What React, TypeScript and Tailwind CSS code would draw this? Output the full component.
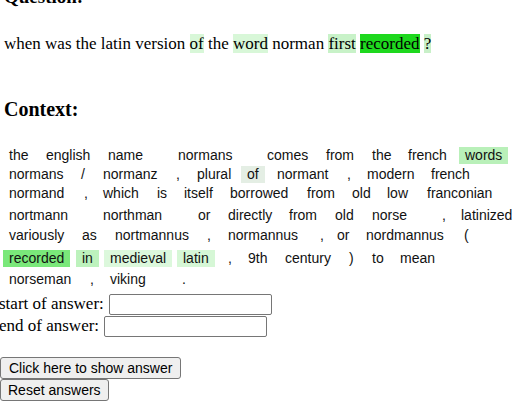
type Token = { t: string; w: string; bg?: string };

const lines: { row: string; tokens: Token[] }[] = [
  {
    row: "mt-[25px]",
    tokens: [
      { t: "the", w: "w-[37px]" },
      { t: "english", w: "w-[62px]" },
      { t: "name", w: "w-[70px]" },
      { t: "normans", w: "w-[89px]" },
      { t: "comes", w: "w-[59px]" },
      { t: "from", w: "w-[46px]" },
      { t: "the", w: "w-[36px]" },
      { t: "french", w: "w-[57px]" },
      { t: "words", w: "w-auto", bg: "bg-[#b9f0b9]" },
    ],
  },
  {
    row: "mt-[2px]",
    tokens: [
      { t: "normans", w: "w-[72px]" },
      { t: "/", w: "w-[22px]" },
      { t: "normanz", w: "w-[73px]" },
      { t: ",", w: "w-[21px]" },
      { t: "plural", w: "w-[50px]" },
      { t: "of", w: "w-[30px]", bg: "bg-[#e4eee4]" },
      { t: "normant", w: "w-[70px]" },
      { t: ",", w: "w-[20px]" },
      { t: "modern", w: "w-[64px]" },
      { t: "french", w: "w-auto" },
    ],
  },
  {
    row: "mt-[2px]",
    tokens: [
      { t: "normand", w: "w-[75px]" },
      { t: ",", w: "w-[19px]" },
      { t: "which", w: "w-[54px]" },
      { t: "is", w: "w-[27px]" },
      { t: "itself", w: "w-[46px]" },
      { t: "borrowed", w: "w-[77px]" },
      { t: "from", w: "w-[45px]" },
      { t: "old", w: "w-[35px]" },
      { t: "low", w: "w-[40px]" },
      { t: "franconian", w: "w-auto" },
    ],
  },
  {
    row: "mt-[5px]",
    tokens: [
      { t: "nortmann", w: "w-[94px]" },
      { t: "northman", w: "w-[95px]" },
      { t: "or", w: "w-[30px]" },
      { t: "directly", w: "w-[61px]" },
      { t: "from", w: "w-[46px]" },
      { t: "old", w: "w-[37px]" },
      { t: "norse", w: "w-[70px]" },
      { t: ",", w: "w-[19px]" },
      { t: "latinized", w: "w-auto" },
    ],
  },
  {
    row: "mt-[3px]",
    tokens: [
      { t: "variously", w: "w-[73px]" },
      { t: "as", w: "w-[33px]" },
      { t: "nortmannus", w: "w-[92px]" },
      { t: ",", w: "w-[21px]" },
      { t: "normannus", w: "w-[92px]" },
      { t: ",", w: "w-[17px]" },
      { t: "or", w: "w-[29px]" },
      { t: "nordmannus", w: "w-[98px]" },
      { t: "(", w: "w-auto" },
    ],
  },
  {
    row: "mt-[6px]",
    tokens: [
      { t: "recorded", w: "w-[73px]", bg: "bg-[#7ae87a]" },
      { t: "in", w: "w-[28px]", bg: "bg-[#bdf2bd]" },
      { t: "medieval", w: "w-[73px]", bg: "bg-[#dcf8dc]" },
      { t: "latin", w: "w-[45px]", bg: "bg-[#d6f7d6]" },
      { t: ",", w: "w-[20px]" },
      { t: "9th", w: "w-[37px]" },
      { t: "century", w: "w-[64px]" },
      { t: ")", w: "w-[23px]" },
      { t: "to", w: "w-[28px]" },
      { t: "mean", w: "w-auto" },
    ],
  },
  {
    row: "mt-[4px]",
    tokens: [
      { t: "norseman", w: "w-[81px]" },
      { t: ",", w: "w-[20px]" },
      { t: "viking", w: "w-[72px]" },
      { t: ".", w: "w-auto" },
    ],
  },
];

function ContextLine({ row, tokens }: { row: string; tokens: Token[] }) {
  return (
    <div className={`flex flex-row h-[17px] pl-[3px] ${row}`}>
      {tokens.map((tok, i) => (
        <div key={i} className={`shrink-0 ${tok.w}`}>
          <span className={`inline-block h-[17px] leading-[17px] px-[6px] whitespace-nowrap ${tok.bg ?? ""}`}>
            {tok.t}
          </span>
        </div>
      ))}
    </div>
  );
}

export default function App() {
  return (
    <div className="w-[514px] h-[402px] overflow-hidden bg-white text-black font-['Liberation_Serif',serif]">
      <h3 className="mt-[-14px] pl-[4px] text-[19px] leading-[22px] font-bold">Question:</h3>

      <div className="mt-[26px] pl-[4px] text-[17px] leading-[19px] whitespace-nowrap">
        when was the latin version <span className="bg-[#d8f7d8]">of</span> the{" "}
        <span className="bg-[#d8f7d8]">word</span> norman <span className="bg-[#c8f2c8]">first</span>{" "}
        <span className="bg-[#1ed81e]">recorded</span> <span className="bg-[#c8f0c8]">?</span>
      </div>

      <h3 className="mt-[45px] pl-[4px] text-[20px] leading-[22px] font-bold">Context:</h3>

      <div className="font-['Liberation_Sans',Arial,sans-serif] text-[14px] text-[#111]">
        {lines.map((l, i) => (
          <ContextLine key={i} row={l.row} tokens={l.tokens} />
        ))}
      </div>

      <div className="mt-[7px] flex flex-col text-[17px] ml-[-1px]">
        <div className="flex flex-row items-center h-[22px]">
          <span>start of answer:</span>
          <input type="text" className="ml-[5px] w-[163px] h-[21px] border border-[#767676] rounded-[2px] bg-white" />
        </div>
        <div className="flex flex-row items-center h-[22px]">
          <span>end of answer:</span>
          <input type="text" className="ml-[5px] w-[163px] h-[21px] border border-[#767676] rounded-[2px] bg-white" />
        </div>
      </div>

      <div className="mt-[20px] flex flex-col items-start font-['Liberation_Sans',Arial,sans-serif] text-[14px]">
        <button className="h-[22px] px-[8px] leading-[20px] bg-[#efefef] border border-[#767676] rounded-[3px]">
          Click here to show answer
        </button>
        <button className="h-[22px] px-[7px] leading-[20px] bg-[#efefef] border border-[#767676] rounded-[3px]">
          Reset answers
        </button>
      </div>
    </div>
  );
}
